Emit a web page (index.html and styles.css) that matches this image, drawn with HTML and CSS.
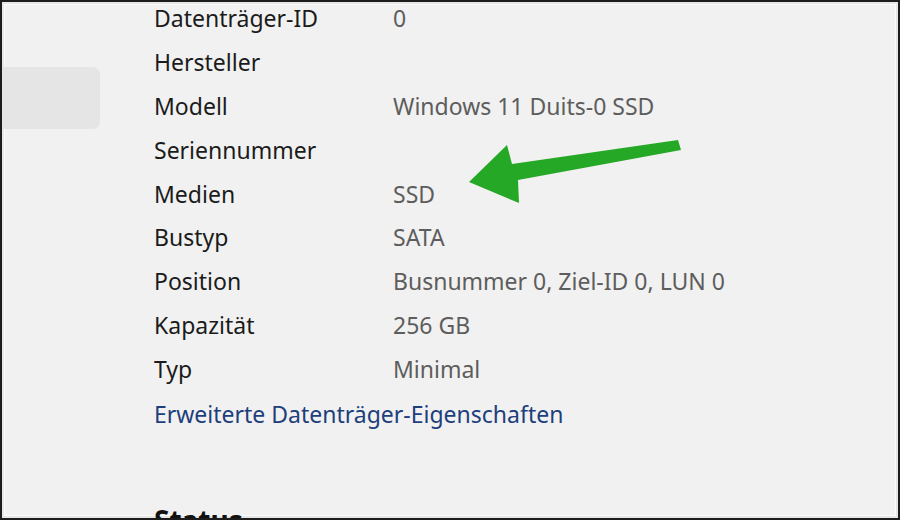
FILE: index.html
```html
<!DOCTYPE html>
<html lang="de">
<head>
  <meta charset="UTF-8" />
  <title>Datenträgereigenschaften</title>
  <link rel="stylesheet" href="styles.css">
</head>
<body>

  <div class="frame">
    <!-- Sidebar -->
    <div class="sidebar">
      <div class="nav-item selected"></div>
    </div>

    <!-- Properties -->
    <div class="content">
      <div class="props">
        <div class="label">Datenträger-ID</div><div class="value">0</div>
        <div class="label">Hersteller</div><div class="value"></div>
        <div class="label">Modell</div><div class="value">Windows 11 Duits-0 SSD</div>
        <div class="label">Seriennummer</div><div class="value"></div>
        <div class="label">Medien</div><div class="value">SSD</div>
        <div class="label">Bustyp</div><div class="value">SATA</div>
        <div class="label">Position</div><div class="value">Busnummer 0, Ziel-ID 0, LUN 0</div>
        <div class="label">Kapazität</div><div class="value">256 GB</div>
        <div class="label">Typ</div><div class="value">Minimal</div>
      </div>
      <a class="more-link" href="#">Erweiterte Datenträger-Eigenschaften</a>
      <h2 class="section-title">Status</h2>
    </div>

    <!-- Annotation arrow -->
    <svg class="arrow" width="900" height="520" viewBox="0 0 900 520">
      <polygon points="678,140 681,150 518,180 519,203 469,182 507,145 512,164" fill="#25a825"/>
    </svg>
  </div>

</body>
</html>
```

FILE: styles.css
```css
* { box-sizing: border-box; margin: 0; padding: 0; }
body { font-family: "Noto Sans", "Open Sans", sans-serif; background: #1c1c1c; }
.frame { width: 900px; height: 520px; position: relative; display: flex; overflow: hidden; background: #f1f1f1; border: 2px solid #1c1c1c; box-shadow: inset 0 0 0 2px #e6e6e6, inset 0 0 0 3px #fbfbfb; }
.sidebar { width: 152px; padding-top: 65px; }
.nav-item { height: 62px; width: 98px; border-radius: 0 7px 7px 0; }
.nav-item.selected { background: #e5e5e5; }
.content { flex: 1; margin-top: -6px; }
.props { display: grid; grid-template-columns: 239px 1fr; grid-auto-rows: 43.9px; align-items: center; }
.label { font-size: 23px; color: #1b1b1b; }
.value { font-size: 23px; color: #5d5d5d; }
.more-link { display: block; margin-top: 7px; font-size: 23px; color: #1d3f7c; text-decoration: none; }
.section-title { margin-top: 71px; font-size: 28px; font-weight: 700; color: #111; }
.arrow { position: absolute; left: -2px; top: -2px; }
```
